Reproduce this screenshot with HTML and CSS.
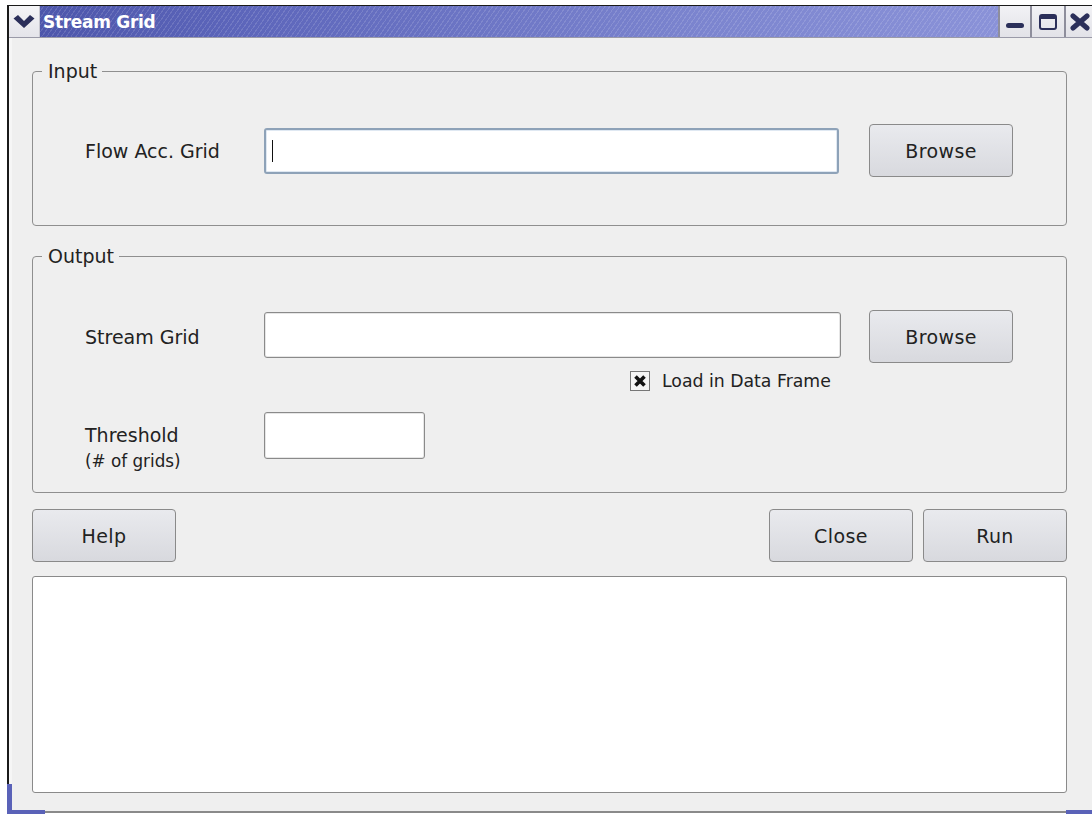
FILE: index.html
```html
<!DOCTYPE html>
<html lang="en">
<head>
<meta charset="utf-8">
<title>Stream Grid</title>
<link rel="stylesheet" href="styles.css">
</head>
<body>
<div class="window">
  <div class="titlebar">
    <div class="menu-btn">
      <svg width="24" height="16" viewBox="0 0 24 16"><path d="M1.5 4.5 L6 1 L12 7 L18 1 L22.5 4.5 L12 14 Z" fill="#2b2f5a"/></svg>
    </div>
    <div class="title">Stream Grid</div>
    <div class="wm-btn">
      <svg width="20" height="16" viewBox="0 0 20 16"><rect x="1" y="9" width="18" height="5" rx="2.5" fill="#2b2f5a"/></svg>
    </div>
    <div class="wm-btn wide">
      <svg width="20" height="18" viewBox="0 0 20 18"><rect x="2" y="2" width="16" height="14" rx="2" fill="none" stroke="#2b2f5a" stroke-width="2"/><rect x="2" y="2" width="16" height="4" fill="#2b2f5a"/></svg>
    </div>
    <div class="wm-btn last">
      <svg width="22" height="18" viewBox="0 0 22 18"><path d="M4 3 L18 15 M18 3 L4 15" stroke="#2b2f5a" stroke-width="5" stroke-linecap="round"/></svg>
    </div>
  </div>

  <div class="client">
    <fieldset class="group group-input">
      <legend>Input</legend>
      <div class="row">
        <label class="label">Flow Acc. Grid</label>
        <div class="field in focused"><span class="caret"></span></div>
        <button class="btn browse">Browse</button>
      </div>
    </fieldset>

    <fieldset class="group group-output">
      <legend>Output</legend>
      <div class="row">
        <label class="label">Stream Grid</label>
        <div class="field out"></div>
        <button class="btn browse">Browse</button>
      </div>
      <div class="check-row">
        <span class="checkbox">
          <svg width="14" height="14" viewBox="0 0 14 14"><path d="M2.5 2.5 L11.5 11.5 M11.5 2.5 L2.5 11.5" stroke="#111" stroke-width="3.6"/></svg>
        </span>
        <span class="check-label">Load in Data Frame</span>
      </div>
      <div class="row threshold-row">
        <label class="label two-line">Threshold<br><small>(# of grids)</small></label>
        <div class="field short"></div>
      </div>
    </fieldset>

    <div class="actions">
      <button class="btn action">Help</button>
      <div class="spacer"></div>
      <button class="btn action">Close</button>
      <button class="btn action">Run</button>
    </div>

    <div class="log"></div>
  </div>
  <div class="bottom-edge">
    <span class="corner left"></span>
    <span class="corner right"></span>
  </div>
</div>
</body>
</html>
```

FILE: styles.css
```css
html, body {
  margin: 0;
  padding: 0;
  background: #ffffff;
}

body {
  font-family: "DejaVu Sans", "Liberation Sans", sans-serif;
  font-size: 19px;
  color: #222;
  padding: 5px 0 0 7px;
  height: 820px;
  box-sizing: border-box;
  overflow: hidden;
}

.window {
  width: 1085px;
  border-top: 1px solid #1a1a1a;
  border-left: 2px solid #1a1a1a;
  background: #efefef;
  display: flex;
  flex-direction: column;
  position: relative;
}

/* ---- title bar ---- */
.titlebar {
  height: 31px;
  display: flex;
  align-items: stretch;
  border-bottom: 1px solid #9a9aa8;
}

.menu-btn {
  width: 31px;
  background: linear-gradient(#f4f4f6, #e4e4ea);
  display: flex;
  align-items: center;
  justify-content: center;
  border-right: 1px solid #c8c8d0;
  box-sizing: border-box;
}

.title {
  width: 958px;
  flex: none;
  color: #ffffff;
  font-weight: bold;
  font-size: 17px;
  line-height: 31px;
  padding-left: 3px;
  padding-top: 1px;
  box-sizing: border-box;
  letter-spacing: -0.3px;
  background:
    repeating-linear-gradient(-55deg, rgba(255,255,255,0) 0 3px, rgba(255,255,255,0.13) 3px 4px),
    linear-gradient(90deg, #4d56ab 0%, #5c65ba 20%, #7c85cf 70%, #8a92d8 100%);
}

.wm-btn {
  width: 32px;
  flex: none;
  background: linear-gradient(#f2f2f5, #e2e2e8);
  border-left: 2px solid #8e8e9c;
  box-sizing: border-box;
  display: flex;
  align-items: center;
  justify-content: center;
}

.wm-btn.wide {
  width: 34px;
}

.wm-btn.last {
  width: 28px;
  justify-content: flex-start;
  padding-left: 3px;
}

/* ---- client area ---- */
.client {
  padding: 23px 27px 0 23px;
  display: flex;
  flex-direction: column;
  box-shadow: inset 3px 0 0 #f6f6f6;
}

.group {
  margin: 0;
  border: 1px solid #8f8f8f;
  border-radius: 4px;
  padding: 0;
  min-width: 0;
  box-sizing: border-box;
}

.group legend {
  margin-left: 9px;
  padding: 0 5px 0 6px;
  font-size: 19px;
  color: #222;
  line-height: 20px;
}

.group-input {
  height: 165px;
}

.group-output {
  margin-top: 20px;
  height: 247px;
}

.row {
  display: flex;
  align-items: center;
}

.group-input .row {
  margin-top: 43px;
}

.group-output .row {
  margin-top: 44px;
}

.label {
  width: 179px;
  padding-left: 52px;
  flex: none;
}

.field {
  background: #ffffff;
  border: 1px solid #8a8a8a;
  border-radius: 3px;
  box-sizing: border-box;
  flex: none;
  box-shadow: inset 0 0 0 1px #e6e6e6;
}

.field.in {
  width: 575px;
  height: 46px;
}

.field.out {
  width: 577px;
  height: 46px;
  margin-bottom: 4px;
}

.field.focused {
  border: 2px solid #8ea2b8;
  box-shadow: inset 0 0 0 1px #dfe8f2;
  display: flex;
  align-items: center;
  padding-left: 6px;
}

.caret {
  width: 1px;
  height: 22px;
  background: #111;
}

.field.short {
  width: 161px;
  height: 47px;
}

.btn {
  font-family: "DejaVu Sans", "Liberation Sans", sans-serif;
  font-size: 19px;
  color: #222;
  background: linear-gradient(#e9eaee, #d8d9de);
  border: 1px solid #8a8a8a;
  border-radius: 4px;
  box-sizing: border-box;
  padding: 0;
  letter-spacing: 0.4px;
}

.btn.browse {
  width: 144px;
  height: 53px;
}

.field.in + .btn.browse {
  margin-left: 30px;
}

.field.out + .btn.browse {
  margin-left: 28px;
}

.check-row {
  display: flex;
  align-items: center;
  margin: 7px 0 0 597px;
  height: 22px;
}

.checkbox {
  width: 20px;
  height: 20px;
  border: 1px solid #777;
  background: #f4f4f4;
  box-sizing: border-box;
  display: flex;
  align-items: center;
  justify-content: center;
}

.check-label {
  margin-left: 12px;
  font-size: 17.3px;
}

.threshold-row {
  align-items: flex-start;
}

.group-output .threshold-row {
  margin-top: 20px;
}

.two-line {
  line-height: 25px;
  padding-top: 11px;
}

.two-line small {
  font-size: 16.8px;
}

.actions {
  display: flex;
  margin-top: 16px;
  gap: 10px;
}

.spacer {
  flex: 1;
}

.btn.action {
  width: 144px;
  height: 53px;
}

.log {
  margin-top: 14px;
  height: 217px;
  background: #ffffff;
  border: 1px solid #8a8a8a;
  border-radius: 3px;
  box-sizing: border-box;
}

.bottom-edge {
  height: 20px;
  border-bottom: 2px solid #8a8a8a;
  position: relative;
  box-sizing: border-box;
  box-shadow: inset 3px 0 0 #f6f6f6;
}

.corner {
  position: absolute;
  background: #5a62b8;
}

.corner.left {
  left: -2px;
  bottom: -3px;
  width: 38px;
  height: 4px;
}

.corner.left::before {
  content: "";
  position: absolute;
  left: 0;
  bottom: 0;
  width: 5px;
  height: 30px;
  background: #5a62b8;
}

.corner.right {
  right: 0;
  bottom: -3px;
  width: 28px;
  height: 4px;
}
```
